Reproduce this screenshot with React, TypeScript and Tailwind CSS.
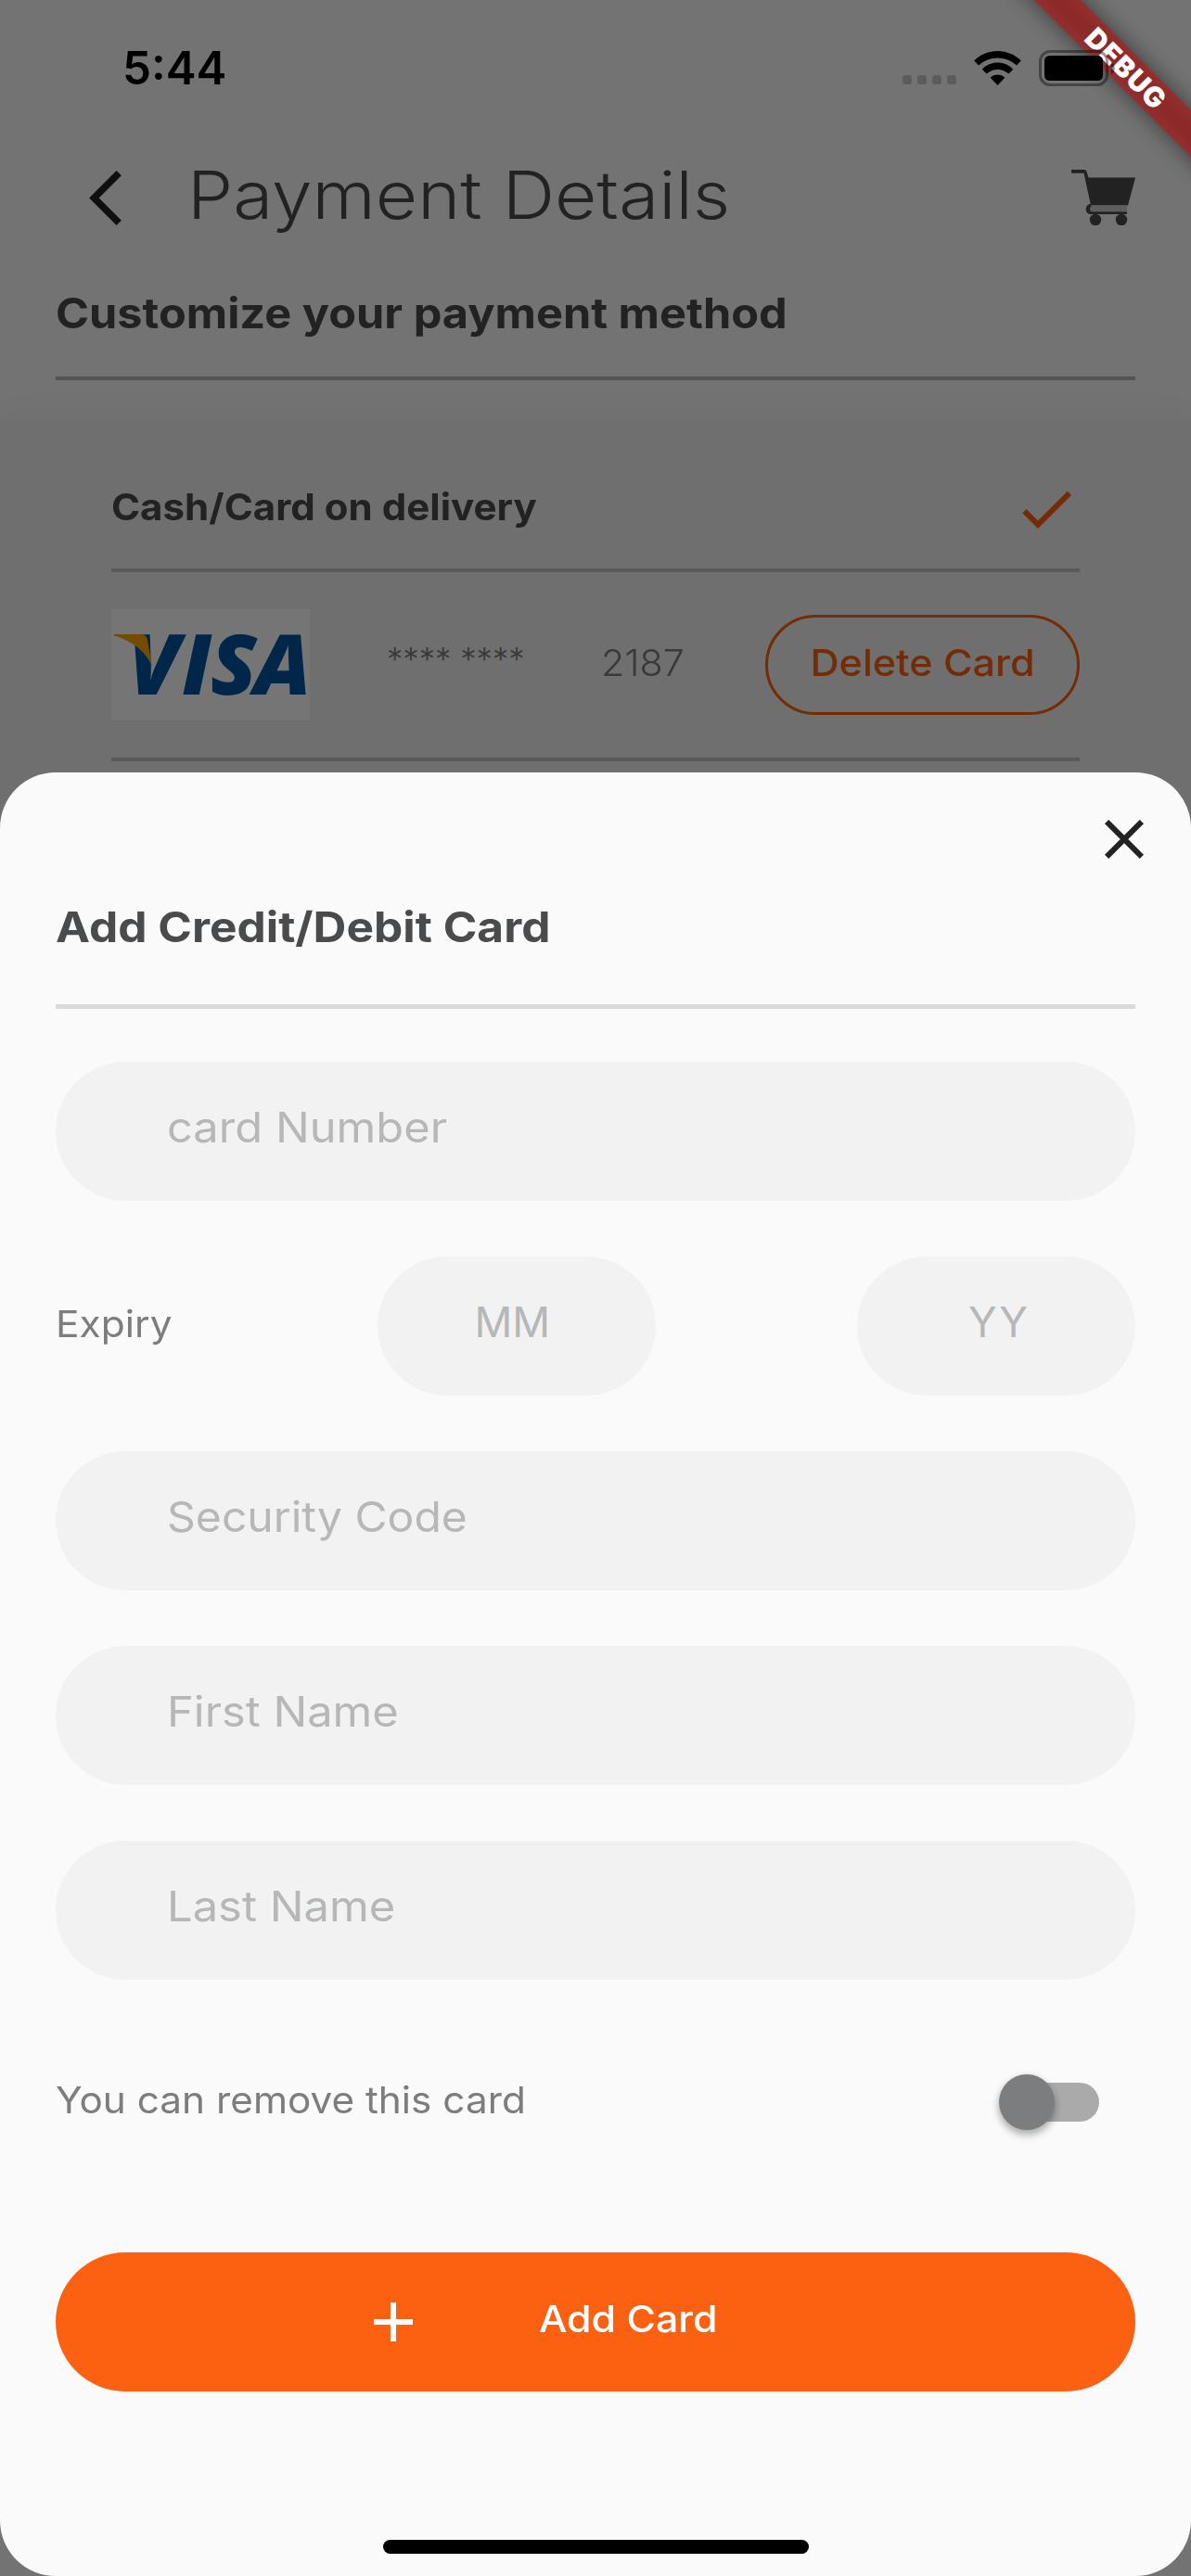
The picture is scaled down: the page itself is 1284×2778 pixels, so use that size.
import { MdAdd, MdCheck, MdClose } from "react-icons/md";

function WifiIcon() {
  return (
    <svg viewBox="0 0 51 37" className="ml-[19px] h-[37px] w-[51px] fill-black">
      <path d="M.2 10.5C14-3.5 37-3.5 50.8 10.5L46 15.5C34.5 4.8 16.5 4.8 5 15.5Z" />
      <path d="M8.8 19.7C18 10.2 33 10.2 42.2 19.7L37.5 24.6C31 18.3 20 18.3 13.5 24.6Z" />
      <path d="M17.7 28.7C22 24.5 29 24.5 33.3 28.7L25.5 37Z" />
    </svg>
  );
}

function BatteryIcon() {
  return (
    <svg viewBox="0 0 82 39" className="ml-[19px] h-[39px] w-[82px]">
      <rect x="1.5" y="1.5" width="72" height="36" rx="10.5" fill="none" stroke="#000" strokeOpacity=".4" strokeWidth="3" />
      <rect x="6" y="6" width="63" height="27" rx="5.5" />
      <path d="M78 13C83 15 83 24 78 26Z" fillOpacity=".45" />
    </svg>
  );
}

function CartIcon() {
  return (
    <svg viewBox="0 0 69 60" className="ml-auto h-[60px] w-[69px] fill-[#4a4b4d]">
      <path d="M0 0H14Q16 0 16.500 2L18.5 8.5H69L61 38.5H21L13.5 3.8H0Z" />
      <path d="M20 38.5H60V45H20Z" fill="#cdcdcd" />
      <path d="M21 37C14 37 14 48 21 48H60V45.3H22C19.500 45 19.500 40 21.500 39.500Z" />
      <circle cx="26" cy="54" r="6.200" />
      <circle cx="54" cy="54" r="6.200" />
    </svg>
  );
}

function VisaLogo() {
  return (
    <svg viewBox="0 0 214 120" className="h-[120px] w-[214px] overflow-visible bg-white">
      <text
        x="18 76 107 154"
        y="92"
        fill="#0053a0"
        className="font-['Open_Sans',sans-serif] text-[91px] leading-none font-extrabold italic"
      >
        VISA
      </text>
      <path d="M3 26V40L22 48L21 35Z" fill="#fff" />
      <path d="M3 27H32Q38 27.500 39 33L44 62C38 46 22 34 3 28.500Z" fill="#faa700" />
    </svg>
  );
}

function Field({ label, stretch }: { label: string; stretch: string }) {
  return (
    <div className="flex h-[150px] items-center rounded-full bg-[#f2f2f2] pb-[9px] pl-[120px] text-[45.2px] leading-none text-[#b6b7b7]">
      <span className={`origin-left ${stretch}`}>{label}</span>
    </div>
  );
}

function PaymentPage() {
  return (
    <div className="pt-[146px] text-[#4a4b4d]">
      <header className="flex h-[134px] items-center pr-[60px] pl-[96px]">
        <svg viewBox="0 2.1 11.67 19.8" className="h-[59px] w-[35px] fill-[#222]">
          <path d="M11.67 3.87L9.9 2.1 0 12l9.9 9.9 1.770-1.770L3.540 12z" />
        </svg>
        <h1 className="mb-[4px] ml-[71px] origin-left scale-x-[1.1] text-[71.2px] leading-none font-[330]">Payment Details</h1>
        <CartIcon />
      </header>
      <div className="px-[60px] pt-[28px]">
        <h2 className="origin-left scale-x-[1.077] text-[45.2px] leading-[60px] font-bold">Customize your payment method</h2>
        <div className="mt-[38px] h-[4px] bg-[#b6b7b7]" />
      </div>
      <section className="mt-[43px] h-[600px] bg-[#f2f2f2] px-[120px] pt-[36px] shadow-[0_0_36px_rgba(0,0,0,0.05)]">
        <div className="flex h-[120px] items-center justify-between">
          <span className="mb-[3px] origin-left scale-x-[1.06] text-[39.7px] leading-none font-bold">Cash/Card on delivery</span>
          <MdCheck className="size-[72px] text-[#fc6011]" />
        </div>
        <div className="mt-[4px] h-[4px] bg-[#c1c2c2]" />
        <div className="flex h-[200px] items-center text-[39.7px] leading-none">
          <VisaLogo />
          <span className="mb-[11px] ml-[83px] w-[231px] text-[34.7px] font-light whitespace-pre text-[#7c7d7e]">**** ****</span>
          <span className="mb-[3px] origin-left scale-x-[1.04] font-light text-[#7c7d7e]">2187</span>
          <div className="ml-auto flex h-[108px] w-[339px] items-center justify-center rounded-full border-[3px] border-[#fc6011] pb-[3px] font-medium text-[#fc6011]">
            <span className="scale-x-[1.085]">Delete Card</span>
          </div>
        </div>
        <div className="h-[4px] bg-[#c1c2c2]" />
      </section>
    </div>
  );
}

function AddCardSheet() {
  return (
    <div className="absolute inset-x-0 top-[833px] bottom-0 rounded-[60px] bg-[#fafafa] px-[60px] pt-[36px]">
      <div className="mr-[-24px] flex justify-end">
        <MdClose className="size-[72px] text-[#222]" />
      </div>
      <h2 className="mt-[29px] origin-left scale-x-[1.098] text-[45.2px] leading-[60px] font-bold text-[#4a4b4d]">Add Credit/Debit Card</h2>
      <div className="mt-[53px] h-[5px] bg-[#d9dada]" />
      <div className="mt-[57px] flex flex-col gap-[60px]">
        <Field label="card Number" stretch="scale-x-[1.08]" />
        <div className="flex items-center justify-between">
          <span className="mb-[3px] w-[129px] origin-left scale-x-[1.07] text-[39.7px] leading-none text-[#7c7d7e]">Expiry</span>
          <div className="flex h-[150px] w-[300px] items-center rounded-full bg-[#f2f2f2] pb-[9px] pl-[105px] text-[45.2px] leading-none text-[#b6b7b7]">MM</div>
          <div className="flex h-[150px] w-[300px] items-center rounded-full bg-[#f2f2f2] pb-[9px] pl-[120px] text-[45.2px] leading-none tracking-[2.5px] text-[#b6b7b7]">YY</div>
        </div>
        <Field label="Security Code" stretch="scale-x-[1.064]" />
        <Field label="First Name" stretch="scale-x-[1.08]" />
        <Field label="Last Name" stretch="scale-x-[1.082]" />
      </div>
      <div className="mt-[60px] flex h-[144px] items-center justify-between pr-[39px]">
        <span className="mb-[3px] origin-left scale-x-[1.066] text-[39.7px] leading-none text-[#7c7d7e]">You can remove this card</span>
        <div className="relative h-[42px] w-[99px] rounded-full bg-[#aaaaaa]">
          <div className="absolute top-[-9px] left-[-9px] size-[60px] rounded-full bg-[#7c7d7e] shadow-[0_6px_9px_rgba(0,0,0,0.22),0_2px_8px_rgba(0,0,0,0.16)]" />
        </div>
      </div>
      <div className="mt-[90px] flex h-[150px] items-center rounded-full bg-[#fc6011] pl-[328px] text-white">
        <MdAdd className="size-[72px]" />
        <span className="mb-[4px] ml-[121px] origin-left scale-x-[1.08] text-[39.7px] leading-none font-medium">Add Card</span>
      </div>
    </div>
  );
}

export default function App() {
  return (
    <div className="relative h-[2778px] w-[1284px] overflow-hidden bg-[#fafafa] font-['Inter',sans-serif]">
      <PaymentPage />
      <div className="absolute inset-0 bg-black/54" />
      <AddCardSheet />

      {/* Corner ribbon with its soft shadow */}
      <div className="absolute top-[56px] left-[1064px] h-[36px] w-[300px] rotate-45 bg-black/50 blur-[12px]" />
      <div className="absolute top-[56px] left-[1064px] flex h-[36px] w-[300px] rotate-45 items-center justify-center bg-[#b71c1c]/63 text-[30.1px] leading-none font-black tracking-[1px] text-white">
        DEBUG
      </div>

      <div className="absolute inset-x-0 top-0 flex h-[146px] items-center pr-[82px] pl-[132px]">
        <span className="mt-[2px] text-[49.3px] leading-none font-semibold">5:44</span>
        <div className="mt-[25px] ml-auto flex gap-[6px]">
          <i className="size-[10px] rounded-[3px] bg-black/20" />
          <i className="size-[10px] rounded-[3px] bg-black/20" />
          <i className="size-[10px] rounded-[3px] bg-black/20" />
          <i className="size-[10px] rounded-[3px] bg-black/20" />
        </div>
        <WifiIcon />
        <BatteryIcon />
      </div>

      <div className="absolute bottom-[24px] left-[413px] h-[15px] w-[459px] rounded-full bg-black" />
    </div>
  );
}
